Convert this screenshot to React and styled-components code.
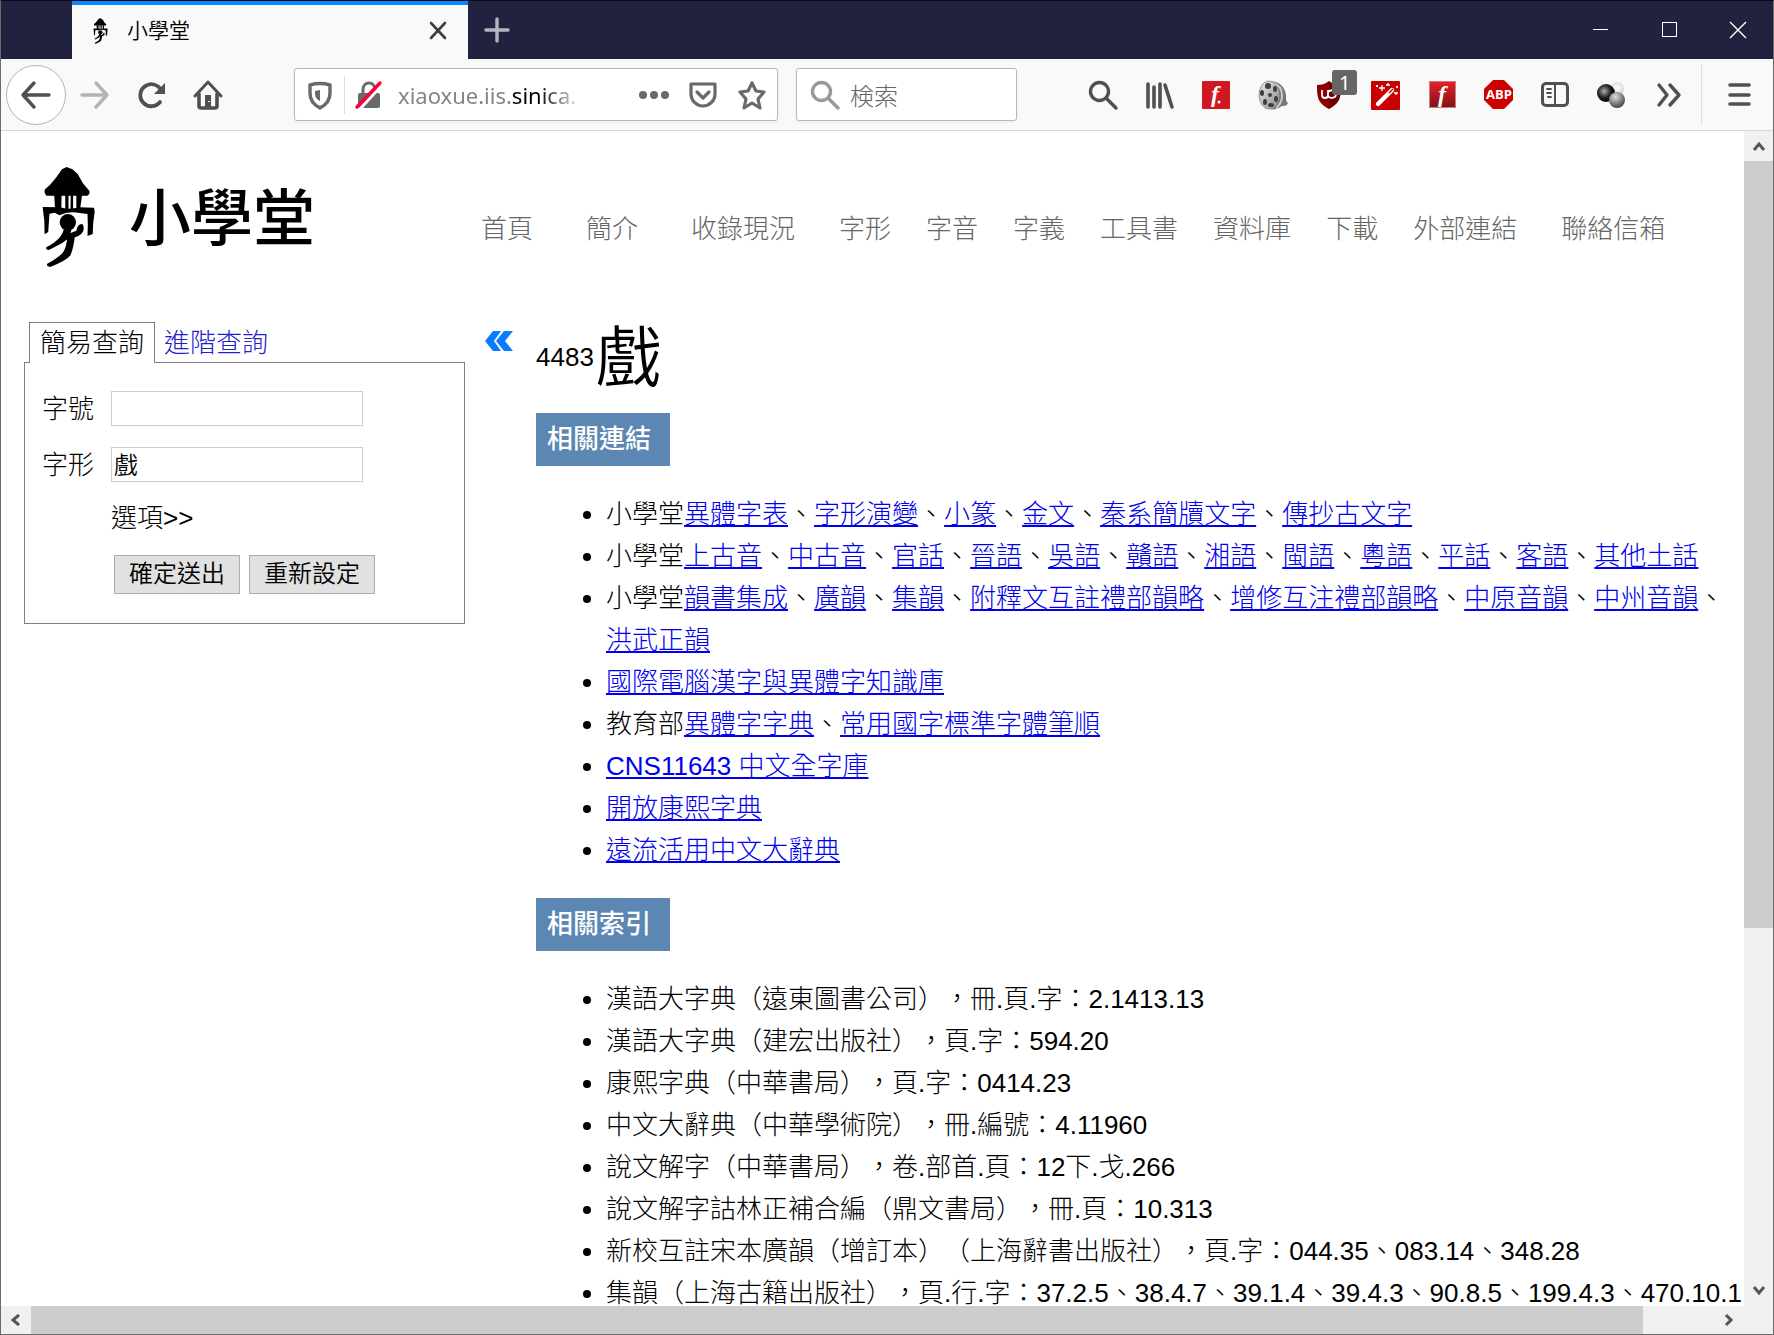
import React from "react";
import styled, { createGlobalStyle } from "styled-components";

const FlashLetter = styled.text`
  font-family: "Liberation Serif", serif;
  font-size: 24px;
  font-style: italic;
  font-weight: 700;
  fill: #fff;
`;

const BadgeLetters = styled.text`
  font-family: "Open Sans", sans-serif;
  font-size: 13px;
  font-weight: 700;
  text-anchor: middle;
  fill: #fff;
`;

const App = () => {
  return (
    <>
      <GlobalStyle />
      <Window lang="zh-Hant">
        <TitleBar />
        <Toolbar />
        <Viewport>
          <Page>
            <SiteHeader />
            <Content>
              <SearchPanel />
              <CollapseButton type="button" aria-label="收合">
                <svg width="28" height="20" viewBox="0 0 28 20" fill="#0a7cff">
                  <path d="M8 0h8L9 10l7 10H8L0 10z" />
                  <path d="M19 0h9l-8 10 8 10h-9l-8-10z" />
                </svg>
              </CollapseButton>
              <Entry />
            </Content>
          </Page>
          <ScrollTrack $vertical>
            <ScrollArrow type="button" $vertical aria-label="上">
              <Chevron d="M3 12l5-6 5 6" />
            </ScrollArrow>
            <ScrollRail $vertical>
              <ScrollThumb $grow={767} />
              <ScrollRest $grow={348} />
            </ScrollRail>
            <ScrollArrow type="button" $vertical aria-label="下">
              <Chevron d="M3 4l5 6 5-6" />
            </ScrollArrow>
          </ScrollTrack>
          <ScrollTrack>
            <ScrollArrow type="button" aria-label="左">
              <Chevron d="M11 3L5 8l6 5" />
            </ScrollArrow>
            <ScrollRail>
              <ScrollThumb $grow={1611} />
              <ScrollRest $grow={71} />
            </ScrollRail>
            <ScrollArrow type="button" aria-label="右">
              <Chevron d="M5 3l5 5-5 5" />
            </ScrollArrow>
          </ScrollTrack>
          <ScrollCorner />
        </Viewport>
      </Window>
    </>
  );
};

export default App;

const Chevron = ({ d }) => (
  <svg width="16" height="16" viewBox="0 0 16 16" fill="none" stroke="#555" strokeWidth="3">
    <path d={d} />
  </svg>
);

const Emblem = ({ width, height }) => (
  <svg width={width} height={height} viewBox="122 76 168 306" preserveAspectRatio="none">
    <path d="M200 79L186 86 170 108 150 132 134 146Q130 158 139 165H264Q272 161 270 151L250 128 234 100 218 86Z" />
    <path d="M162 160L185 160 184 208 165 204ZM196 160H206V206H196ZM213 160H220V206H212ZM230 160H248L241 208H230Z" />
    <path d="M127 199L180 200Q206 208 240 200L284 201 286 214Q280 246 280 280L264 286Q266 250 264 220L240 217Q206 210 178 224L164 216 148 219 144 274 133 281Q134 240 127 199Z" />
    <circle cx="204" cy="245" r="25" />
    <path d="M192 258L217 256Q212 294 186 308L146 328Q136 328 138 320 192 292 192 258Z" />
    <path d="M184 290Q206 278 230 270 234 250 246 250 254 252 252 268 248 284 226 290L218 292 186 300Z" />
    <path d="M202 292L226 280Q222 322 212 344 200 360 152 378 140 380 140 370 180 348 190 334 200 318 202 292Z" />
  </svg>
);

const TitleBar = () => (
  <TitleBarRow>
    <Tab>
      <Emblem width="15" height="26" />
      <TabTitle>小學堂</TabTitle>
      <PlainButton type="button" aria-label="關閉分頁">
        <svg width="18" height="18" viewBox="0 0 18 18" stroke="#3f3f42" strokeWidth="2.6" strokeLinecap="round">
          <path d="M2 1l14 15M16 1L2 16" />
        </svg>
      </PlainButton>
    </Tab>
    <NewTab type="button" aria-label="新分頁">
      <svg width="26" height="26" viewBox="0 0 26 26" stroke="#b4b4c0" strokeWidth="3.4" strokeLinecap="round">
        <path d="M13 2v22M2 13h22" />
      </svg>
    </NewTab>
    <WindowControls>
      <ControlButton type="button" aria-label="最小化">
        <svg width="18" height="18" viewBox="0 0 18 18" stroke="#fff" strokeWidth="1">
          <path d="M1 8.5h15" />
        </svg>
      </ControlButton>
      <ControlButton type="button" aria-label="最大化">
        <svg width="18" height="18" viewBox="0 0 18 18" stroke="#fff" fill="none">
          <rect x="1.5" y="1.5" width="14" height="14" />
        </svg>
      </ControlButton>
      <ControlButton type="button" aria-label="關閉">
        <svg width="18" height="18" viewBox="0 0 18 18" stroke="#fff" strokeWidth="1.4">
          <path d="M0 1l16 16M16 1L0 17" />
        </svg>
      </ControlButton>
    </WindowControls>
  </TitleBarRow>
);

const Stroke = ({ color = "#505050", width = 3.4, children }) => (
  <svg
    width="30"
    height="30"
    viewBox="0 0 30 30"
    fill="none"
    stroke={color}
    strokeWidth={width}
    strokeLinecap="round"
    strokeLinejoin="round"
  >
    {children}
  </svg>
);

const extensions = [
  {
    name: "搜尋",
    icon: (
      <Stroke>
        <circle cx="11.5" cy="11.5" r="9" />
        <path d="M18 18l10 10" />
      </Stroke>
    ),
  },
  {
    name: "書庫",
    icon: (
      <Stroke width={3.6}>
        <path d="M3 4v23M9 7v20M15 4v23M20 5l7 22" />
      </Stroke>
    ),
  },
  {
    name: "Flash",
    icon: (
      <svg width="30" height="30" viewBox="0 0 30 30">
        <rect x="1" y="1" width="28" height="28" rx="1" fill="#cf1820" />
        <FlashLetter x="10" y="22">
          f
        </FlashLetter>
        <circle cx="18" cy="22" r="1.5" fill="#fff" />
      </svg>
    ),
  },
  {
    name: "影片",
    icon: (
      <svg width="30" height="30" viewBox="0 0 30 30">
        <defs>
          <linearGradient id="reel" x1="0" y1="0" x2="1" y2="1">
            <stop offset="0" stopColor="#ececec" />
            <stop offset="1" stopColor="#8a8a8a" />
          </linearGradient>
        </defs>
        <path d="M10 1c10-1 17 5 18 14 0 5 0 7 2 8-1 3-4 3-6 3-4 3-9 4-13 3z" fill="#777" />
        <path d="M14 2c6 2 10 7 10 14 0 5-2 9-6 12" stroke="#c9c9c9" strokeWidth="2" fill="none" />
        <ellipse cx="11" cy="15" rx="10" ry="14" fill="url(#reel)" stroke="#999" />
        <g fill="#3e3e3e">
          <ellipse cx="10" cy="6" rx="3" ry="3" />
          <ellipse cx="17" cy="9" rx="2" ry="3" />
          <ellipse cx="4" cy="13" rx="2" ry="3" />
          <ellipse cx="12" cy="15" rx="2" ry="2" />
          <ellipse cx="18" cy="19" rx="2" ry="3" />
          <ellipse cx="7" cy="22" rx="2" ry="3" />
          <ellipse cx="13" cy="25" rx="3" ry="2" />
        </g>
      </svg>
    ),
  },
  {
    name: "uBlock",
    badge: "1",
    icon: (
      <svg width="30" height="30" viewBox="0 0 30 30">
        <path d="M15 1c4 3 8 4 12 4 0 13-1 18-12 24z" fill="#6e0000" />
        <path d="M15 1C11 4 7 5 3 5c0 13 1 18 12 24z" fill="#8b0000" />
        <path
          d="M8 10v5c0 4 6 4 6 0v-5M14 15c0 4 8 4 8-1 0-4-5-5-8-2"
          fill="none"
          stroke="#fff"
          strokeWidth="1.8"
        />
      </svg>
    ),
  },
  {
    name: "魔術棒",
    icon: (
      <svg width="30" height="30" viewBox="0 0 30 30">
        <rect x="0" y="1" width="29" height="29" rx="1" fill="#c90000" />
        <path d="M7 24L21 10" stroke="#fff" strokeWidth="4.4" strokeLinecap="round" />
        <path d="M18 13l4-4" stroke="#c90000" strokeWidth="1.5" />
        <path
          d="M11 5v6M8 8h6M17 3v3M15 5h4M25 12v3M23 13h4M6 5v2M5 6h2M26 6v2M25 7h2"
          stroke="#fff"
          strokeWidth="1.3"
        />
      </svg>
    ),
  },
  {
    name: "Flash Player",
    icon: (
      <svg width="30" height="30" viewBox="0 0 30 30">
        <defs>
          <linearGradient id="flash" x1="0" y1="0" x2="0" y2="1">
            <stop offset="0" stopColor="#e6212a" />
            <stop offset="1" stopColor="#7d1317" />
          </linearGradient>
        </defs>
        <rect x="1.5" y="1.5" width="26" height="26" fill="url(#flash)" stroke="#c98084" />
        <FlashLetter x="10" y="22">
          f
        </FlashLetter>
      </svg>
    ),
  },
  {
    name: "Adblock Plus",
    icon: (
      <svg width="30" height="30" viewBox="0 0 30 30">
        <path d="M9 0h11l9 9v11l-9 9H9l-9-9V9z" fill="#cc0000" />
        <BadgeLetters x="15" y="19">
          ABP
        </BadgeLetters>
      </svg>
    ),
  },
  {
    name: "側邊欄",
    icon: (
      <Stroke width={3}>
        <rect x="1.5" y="3.5" width="25" height="22" rx="3.5" />
        <path d="M14 4v21" strokeWidth="2" />
        <path d="M6 9h4M6 13h4M7 17h3" strokeWidth="1.8" />
      </Stroke>
    ),
  },
  {
    name: "球",
    icon: (
      <svg width="30" height="30" viewBox="0 0 30 30">
        <defs>
          <radialGradient id="dark" cx="0.4" cy="0.4" r="0.6">
            <stop offset="0" stopColor="#aaa" />
            <stop offset="0.6" stopColor="#222" />
            <stop offset="1" stopColor="#000" />
          </radialGradient>
          <radialGradient id="light" cx="0.5" cy="0.4" r="0.6">
            <stop offset="0" stopColor="#fff" />
            <stop offset="1" stopColor="#d2d2d2" />
          </radialGradient>
          <radialGradient id="mid" cx="0.4" cy="0.3" r="0.7">
            <stop offset="0" stopColor="#ddd" />
            <stop offset="1" stopColor="#444" />
          </radialGradient>
        </defs>
        <circle cx="20" cy="9" r="7" fill="url(#light)" />
        <circle cx="9" cy="13" r="9" fill="url(#dark)" />
        <circle cx="20" cy="20" r="8" fill="url(#mid)" />
      </svg>
    ),
  },
  {
    name: "更多工具",
    icon: (
      <Stroke>
        <path d="M5 5l8 10-8 10M16 5l9 10-9 10" />
      </Stroke>
    ),
  },
];

const Toolbar = () => (
  <ToolbarRow>
    <BackButton type="button" aria-label="上一頁">
      <Stroke>
        <path d="M28 15H2M13 3L2 15l11 12" />
      </Stroke>
    </BackButton>
    <NavButton type="button" aria-label="下一頁">
      <Stroke color="#b4b4b4">
        <path d="M2 15h25M16 3l11 12-11 12" />
      </Stroke>
    </NavButton>
    <NavButton type="button" aria-label="重新載入">
      <Stroke width={3.8}>
        <path d="M23 22A11 11 0 1 1 24 10" />
        <path d="M28 3v11H17z" fill="#505050" stroke="none" />
      </Stroke>
    </NavButton>
    <NavButton type="button" aria-label="首頁">
      <Stroke width={3}>
        <path d="M1 16L14 2l13 14" />
        <path d="M5 14v12q0 2 2 2h14q2 0 2-2V14" strokeWidth="3.6" />
        <path d="M14 15v12" strokeWidth="6" strokeLinecap="butt" />
        <path d="M15 21v1" stroke="#f9f9fa" strokeWidth="2" strokeLinecap="butt" />
      </Stroke>
    </NavButton>
    <UrlBar>
      <Stroke color="#696969" width={3.4}>
        <path d="M5 5c7-2 13-2 20 0v8c0 8-4 12-10 15-6-3-10-7-10-15z" />
        <path d="M15 10v11c-4-2-5-4-5-9v-1z" fill="#696969" stroke="none" />
      </Stroke>
      <UrlDivider />
      <svg width="30" height="30" viewBox="0 0 30 30">
        <path d="M9 13V9a6 6 0 0 1 12 0v4" fill="none" stroke="#696969" strokeWidth="3" />
        <rect x="4" y="13" width="22" height="15" rx="2" fill="#696969" />
        <path d="M6 29L29 4" stroke="#fff" strokeWidth="3" />
        <path d="M3 27L26 3" stroke="#ff0039" strokeWidth="3.4" strokeLinecap="round" />
      </svg>
      <Address>
        xiaoxue.iis.<b>sinica.</b>
      </Address>
      <PlainButton type="button" aria-label="頁面動作">
        <Stroke width={0}>
          <circle cx="4" cy="15" r="4" fill="#696969" />
          <circle cx="15" cy="15" r="4" fill="#696969" />
          <circle cx="26" cy="15" r="4" fill="#696969" />
        </Stroke>
      </PlainButton>
      <PlainButton type="button" aria-label="Pocket">
        <Stroke color="#696969" width={3.2}>
          <path d="M3 4h24v10a12 12 0 0 1-24 0z" />
          <path d="M9 12l6 6 6-6" />
        </Stroke>
      </PlainButton>
      <PlainButton type="button" aria-label="書籤">
        <Stroke color="#696969" width={3.2}>
          <path d="M15 3l4 8 8 1-6 7 2 9-8-5-8 5 2-9-6-7 8-1z" />
        </Stroke>
      </PlainButton>
    </UrlBar>
    <SearchBox>
      <Stroke color="#999">
        <circle cx="11.5" cy="11.5" r="9" />
        <path d="M18 18l10 10" />
      </Stroke>
      <SearchInput type="text" aria-label="検索" placeholder="検索" lang="ja" />
    </SearchBox>
    <Extensions>
      {extensions.map((item) => (
        <ExtensionButton type="button" key={item.name} aria-label={item.name}>
          {item.icon}
          {item.badge && <CountBadge>{item.badge}</CountBadge>}
        </ExtensionButton>
      ))}
    </Extensions>
    <MenuButton type="button" aria-label="選單">
      <Stroke width={3.6}>
        <path d="M5 5h19M5 15h19M5 24h19" />
      </Stroke>
    </MenuButton>
  </ToolbarRow>
);

const menu = [
  { label: "首頁", wide: true },
  { label: "簡介", wide: true },
  { label: "收錄現況", wide: true },
  { label: "字形" },
  { label: "字音" },
  { label: "字義" },
  { label: "工具書" },
  { label: "資料庫" },
  { label: "下載" },
  { label: "外部連結" },
  { label: "聯絡信箱", wide: true },
];

const SiteHeader = () => (
  <HeaderRow>
    <Logo href="#">
      <Emblem width="55" height="102" />
      <LogoText>小學堂</LogoText>
    </Logo>
    <Menu>
      {menu.map((item) => (
        <MenuLink href="#" key={item.label} $wide={item.wide}>
          {item.label}
        </MenuLink>
      ))}
    </Menu>
  </HeaderRow>
);

const SearchPanel = () => (
  <Panel>
    <PanelTabs>
      <PanelTab type="button" $active>
        簡易查詢
      </PanelTab>
      <PanelTab type="button">進階查詢</PanelTab>
    </PanelTabs>
    <PanelForm>
      <FieldLabel htmlFor="char-no">字號</FieldLabel>
      <FieldInput id="char-no" type="text" />
      <FieldLabel htmlFor="char-form">字形</FieldLabel>
      <FieldInput id="char-form" type="text" defaultValue="戲" />
      <Options type="button">選項&gt;&gt;</Options>
      <FormButtons>
        <FormButton type="button">確定送出</FormButton>
        <FormButton type="button">重新設定</FormButton>
      </FormButtons>
    </PanelForm>
  </Panel>
);

const links = [
  { prefix: "小學堂", items: ["異體字表", "字形演變", "小篆", "金文", "秦系簡牘文字", "傳抄古文字"] },
  {
    prefix: "小學堂",
    items: [
      "上古音",
      "中古音",
      "官話",
      "晉語",
      "吳語",
      "贛語",
      "湘語",
      "閩語",
      "粵語",
      "平話",
      "客語",
      "其他土話",
    ],
  },
  {
    prefix: "小學堂",
    items: [
      "韻書集成",
      "廣韻",
      "集韻",
      "附釋文互註禮部韻略",
      "增修互注禮部韻略",
      "中原音韻",
      "中州音韻",
      "洪武正韻",
    ],
  },
  { items: ["國際電腦漢字與異體字知識庫"] },
  { prefix: "教育部", items: ["異體字字典", "常用國字標準字體筆順"] },
  { items: ["CNS11643 中文全字庫"] },
  { items: ["開放康熙字典"] },
  { items: ["遠流活用中文大辭典"] },
];

const indexes = [
  "漢語大字典（遠東圖書公司），冊.頁.字：2.1413.13",
  "漢語大字典（建宏出版社），頁.字：594.20",
  "康熙字典（中華書局），頁.字：0414.23",
  "中文大辭典（中華學術院），冊.編號：4.11960",
  "說文解字（中華書局），卷.部首.頁：12下.戈.266",
  "說文解字詁林正補合編（鼎文書局），冊.頁：10.313",
  "新校互註宋本廣韻（增訂本）（上海辭書出版社），頁.字：044.35、083.14、348.28",
  "集韻（上海古籍出版社），頁.行.字：37.2.5、38.4.7、39.1.4、39.4.3、90.8.5、199.4.3、470.10.1",
];

const Entry = () => (
  <EntryColumn>
    <EntryHead>
      4483<Glyph>戲</Glyph>
    </EntryHead>
    <SectionTitle>相關連結</SectionTitle>
    <List>
      {links.map((row, i) => (
        <li key={i}>
          {row.prefix}
          {row.items.map((item, n) => (
            <React.Fragment key={item}>
              {n > 0 && "、"}
              <a href="#">{item}</a>
            </React.Fragment>
          ))}
        </li>
      ))}
    </List>
    <SectionTitle>相關索引</SectionTitle>
    <List $nowrap>
      {indexes.map((text) => (
        <li key={text}>{text}</li>
      ))}
    </List>
  </EntryColumn>
);

const GlobalStyle = createGlobalStyle`
  * {
    box-sizing: border-box;
  }
  body {
    margin: 0;
    font-family: "Liberation Sans", "Noto Sans CJK TC", sans-serif;
    font-size: 26px;
    font-weight: 300;
    color: #000;
    text-spacing-trim: space-all;
  }
  button,
  input {
    font: inherit;
    color: inherit;
  }
  svg {
    display: block;
    flex-shrink: 0;
    overflow: visible;
  }
`;

const Window = styled.div`
  height: 100vh;
  display: flex;
  flex-direction: column;
  overflow: hidden;
  border: 1px solid #6b6b6b;
  border-top-color: #0c0c14;
  background: #fff;
`;

/* title bar */
const TitleBarRow = styled.div`
  display: flex;
  height: 58px;
  flex-shrink: 0;
  padding-left: 71px;
  background: #20223f;
`;

const Tab = styled.div`
  display: flex;
  align-items: center;
  width: 396px;
  padding: 0 21px 2px;
  border-top: 4px solid #0a84ff;
  background: #f9f9fa;
`;

const TabTitle = styled.span`
  flex: 1;
  padding-left: 19px;
  font-size: 21px;
  font-weight: 350;
  line-height: 30px;
`;

const PlainButton = styled.button`
  display: flex;
  padding: 0;
  border: 0;
  background: none;
`;

const NewTab = styled(PlainButton)`
  align-items: center;
  padding: 0 16px;
`;

const WindowControls = styled.div`
  display: flex;
  margin-left: auto;
`;

const ControlButton = styled(PlainButton)`
  width: 69px;
  align-items: center;
  justify-content: center;
`;

/* toolbar */
const ToolbarRow = styled.div`
  display: flex;
  align-items: center;
  height: 72px;
  flex-shrink: 0;
  padding-left: 5px;
  border-bottom: 1px solid #d8d8d8;
  background: #f9f9fa;
`;

const BackButton = styled(PlainButton)`
  width: 60px;
  height: 60px;
  align-items: center;
  justify-content: center;
  border: 1px solid #b5b5b5;
  border-radius: 50%;
  background: #fff;
`;

const NavButton = styled(PlainButton)`
  width: 57px;
  justify-content: center;
`;

const UrlBar = styled.div`
  display: flex;
  flex: 1;
  align-items: center;
  gap: 19px;
  height: 53px;
  margin-left: 57px;
  padding: 0 10px;
  border: 1px solid #b9b9b9;
  border-radius: 3px;
  background: #fff;
  box-shadow: 0 1px 4px rgba(0, 0, 0, 0.06);
`;

const UrlDivider = styled.div`
  width: 1px;
  height: 38px;
  margin: 0 -10px;
  background: #dcdcdc;
`;

const Address = styled.div`
  flex: 1;
  margin-left: -5px;
  overflow: hidden;
  white-space: nowrap;
  font-family: "Noto Sans", sans-serif;
  font-size: 22px;
  font-weight: 400;
  line-height: 32px;
  color: #858585;
  mask-image: linear-gradient(90deg, #000 140px, transparent 184px);

  b {
    font-weight: 400;
    color: #000;
  }
`;

const SearchBox = styled.label`
  display: flex;
  align-items: center;
  gap: 10px;
  width: 221px;
  height: 53px;
  margin: 0 58px 0 18px;
  padding: 0 13px;
  border: 1px solid #b9b9b9;
  border-radius: 3px;
  background: #fff;
  box-shadow: 0 1px 4px rgba(0, 0, 0, 0.06);
`;

const SearchInput = styled.input`
  flex: 1;
  min-width: 0;
  padding: 0;
  border: 0;
  outline: 0;
  background: none;
  font-family: "Noto Sans CJK JP", sans-serif;
  font-size: 24px;

  &::placeholder {
    color: #666;
  }
`;

const Extensions = styled.div`
  display: flex;
  width: 626px;
  padding-right: 4px;
  align-self: stretch;
`;

const ExtensionButton = styled(PlainButton)`
  position: relative;
  flex: 1;
  align-items: center;
  justify-content: center;
`;

const CountBadge = styled.span`
  position: absolute;
  top: 11px;
  left: 31px;
  width: 25px;
  border-radius: 3px;
  background: #666;
  color: #fff;
  font-family: "Noto Sans", sans-serif;
  font-size: 20px;
  font-weight: 400;
  line-height: 25px;
`;

const MenuButton = styled(PlainButton)`
  width: 72px;
  height: 60px;
  align-items: center;
  justify-content: center;
  padding-left: 4px;
  border-left: 1px solid #dcdcdc;
`;

/* scrolling area */
const Viewport = styled.div`
  display: grid;
  flex: 1;
  min-height: 0;
  grid-template-columns: minmax(0, 1fr) 29px;
  grid-template-rows: minmax(0, 1fr) 28px;
`;

const ScrollTrack = styled.div`
  display: flex;
  flex-direction: ${(props) => (props.$vertical ? "column" : "row")};
  background: #f0f0f0;
`;

const ScrollArrow = styled(PlainButton)`
  width: ${(props) => (props.$vertical ? "auto" : "30px")};
  height: ${(props) => (props.$vertical ? "30px" : "auto")};
  align-items: center;
  justify-content: center;
`;

const ScrollRail = styled.div`
  flex: 1;
  display: flex;
  flex-direction: ${(props) => (props.$vertical ? "column" : "row")};
`;

const ScrollRest = styled.div`
  flex: ${(props) => props.$grow} 0 0;
`;

const ScrollThumb = styled(ScrollRest)`
  background: #cdcdcd;
`;

const ScrollCorner = styled.div`
  background: #f0f0f0;
`;

const Page = styled.main`
  overflow: hidden;
`;

/* site header */
const HeaderRow = styled.header`
  display: flex;
  align-items: flex-start;
  padding: 35px 0 0 40px;
`;

const Logo = styled.a`
  display: flex;
  align-items: center;
  gap: 33px;
  width: 441px;
  color: #000;
  text-decoration: none;
`;

const LogoText = styled.span`
  padding-top: 6px;
  font-size: 62px;
  font-weight: 500;
  line-height: 72px;
`;

const Menu = styled.nav`
  display: flex;
  gap: 35px;
  margin-top: 42px;
  margin-left: -10px;
`;

const MenuLink = styled.a`
  padding: 0 ${(props) => (props.$wide ? "9px" : "0")};
  color: #666;
  line-height: 42px;
  text-decoration: none;
  white-space: nowrap;
`;

/* query form */
const Content = styled.div`
  display: flex;
  align-items: flex-start;
  padding: 54px 0 0 23px;
`;

const Panel = styled.section`
  width: 441px;
  flex-shrink: 0;
`;

const PanelTabs = styled.div`
  display: flex;
  padding-left: 5px;
`;

const PanelTab = styled.button`
  height: 41px;
  margin-bottom: -1px;
  padding: 0 ${(props) => (props.$active ? "10px" : "8px")};
  border: 1px solid ${(props) => (props.$active ? "#808080" : "transparent")};
  border-bottom: 0;
  background: ${(props) => (props.$active ? "#fff" : "none")};
  color: ${(props) => (props.$active ? "#000" : "#2020cc")};
  line-height: 39px;
  z-index: 1;
`;

const PanelForm = styled.form`
  display: grid;
  grid-template-columns: 69px 252px;
  row-gap: 21px;
  align-items: center;
  padding: 28px 0 29px 17px;
  border: 1px solid #808080;
`;

const FieldLabel = styled.label`
  line-height: 36px;
  height: 35px;
`;

const FieldInput = styled.input`
  width: 252px;
  height: 35px;
  padding: 0 2px 2px;
  border: 1px solid #ccc;
  background: #fff;
  font-size: 24px;
  font-weight: 350;
`;

const Options = styled(PlainButton)`
  grid-column: 2;
  line-height: 31px;
`;

const FormButtons = styled.div`
  display: flex;
  grid-column: 2;
  gap: 9px;
  padding-left: 3px;
`;

const FormButton = styled.button`
  width: 126px;
  height: 39px;
  flex-shrink: 0;
  padding: 0 0 2px;
  border: 1px solid #adadad;
  background: #e1e1e1;
  font-size: 24px;
  font-weight: 350;
  line-height: 34px;
`;

const CollapseButton = styled(PlainButton)`
  padding: 9px 23px 0 20px;
`;

/* entry */
const EntryColumn = styled.article`
  flex: 1;
  min-width: 0;
`;

const EntryHead = styled.div`
  display: flex;
  align-items: center;
  height: 71px;
`;

const Glyph = styled.span`
  margin-left: 2px;
  font-size: 66px;
  font-weight: 350;
  line-height: 72px;
`;

const SectionTitle = styled.h2`
  width: 134px;
  margin: 0;
  padding: 0 11px;
  background: #5c87b2;
  color: #fff;
  font-size: 26px;
  font-weight: 500;
  line-height: 53px;
  white-space: nowrap;

  ${EntryHead} + & {
    margin-top: 20px;
  }
`;

const List = styled.ul`
  margin: 27px 0;
  padding-left: 70px;
  line-height: 42px;
  white-space: ${(props) => (props.$nowrap ? "nowrap" : "normal")};

  a {
    color: #0000ee;
  }
`;
